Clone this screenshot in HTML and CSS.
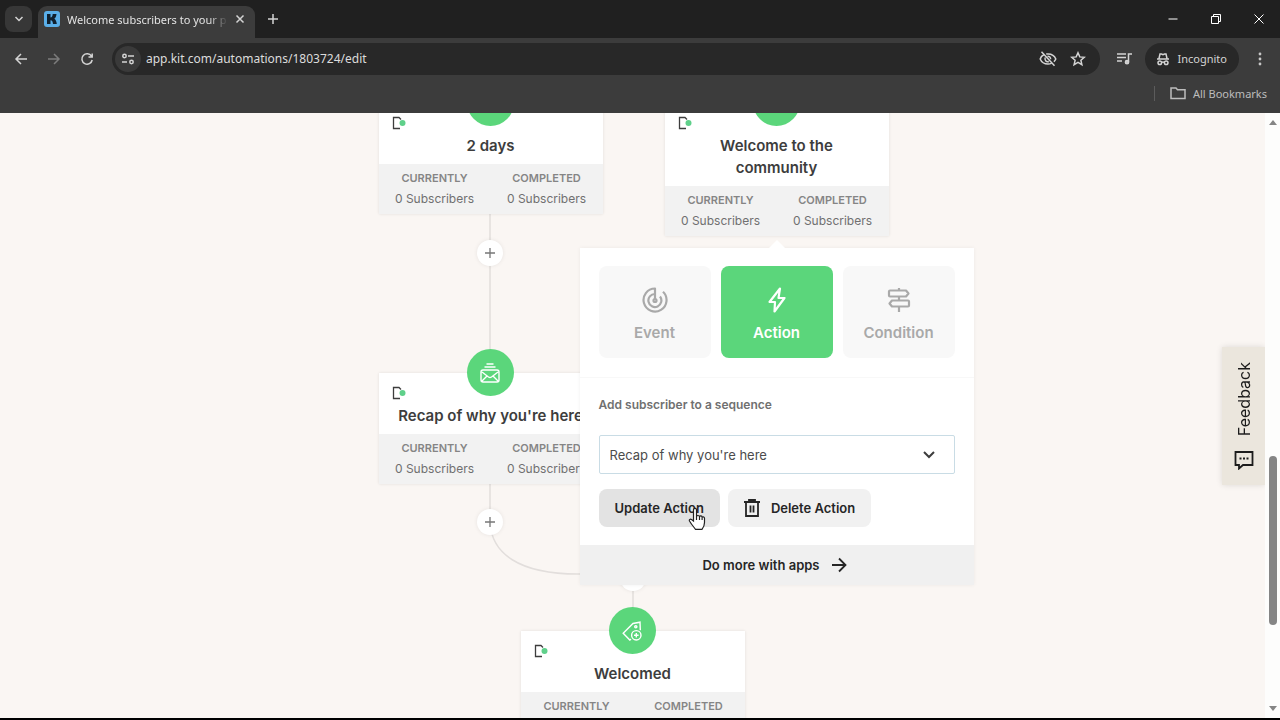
FILE: index.html
```html
<!DOCTYPE html>
<html lang="en">
<head>
<meta charset="utf-8">
<title>Welcome subscribers to your products</title>
<link rel="stylesheet" href="styles.css">
</head>
<body>
<header class="browser">
  <div class="tabstrip">
    <button class="tab-search" aria-label="Search tabs"><svg width="12" height="12" viewBox="0 0 12 12"><path d="M2.500 4l3.500 3.500L9.500 4"/></svg></button>
    <div class="tab">
      <svg class="favicon" width="16" height="16" viewBox="0 0 16 16"><rect width="16" height="16" rx="3" fill="#5aaee8"/><path d="M3 3h3.500v3.500C8 6.500 8.500 5 8.700 3h3.800c-.2 2.300-1 4-2.200 4.700 1.400.8 2.200 2.500 2.500 5.300H9c-.2-2.500-.8-3.800-2.500-3.800V13H3z" fill="#10202e"/></svg>
      <span class="tab-title">Welcome subscribers to your p</span>
      <button class="plain" aria-label="Close tab"><svg width="10" height="10" viewBox="0 0 10 10"><path d="M1.500 1.500l7 7M8.500 1.500l-7 7"/></svg></button>
    </div>
    <button class="plain new-tab" aria-label="New tab"><svg width="12" height="12" viewBox="0 0 12 12"><path d="M6 1v10M1 6h10"/></svg></button>
    <div class="window-controls">
      <button class="plain" aria-label="Minimize"><svg class="thin" width="12" height="12" viewBox="0 0 12 12"><path d="M1.500 6h9"/></svg></button>
      <button class="plain" aria-label="Restore"><svg class="thin" width="12" height="12" viewBox="0 0 12 12"><path d="M1.500 3.500h7v7h-7zM3.500 3.500v-2h7v7h-2"/></svg></button>
      <button class="plain" aria-label="Close"><svg class="thin" width="12" height="12" viewBox="0 0 12 12"><path d="M1.500 1.500l9 9M10.500 1.500l-9 9"/></svg></button>
    </div>
  </div>
  <div class="toolbar">
    <button class="plain nav" aria-label="Back"><svg width="14" height="14" viewBox="0 0 14 14"><path d="M13 7H2M7 2L2 7l5 5"/></svg></button>
    <button class="plain nav dim" aria-label="Forward"><svg width="14" height="14" viewBox="0 0 14 14"><path d="M1 7h11M7 2l5 5-5 5"/></svg></button>
    <button class="plain nav" aria-label="Reload"><svg width="14" height="14" viewBox="0 0 14 14"><path d="M11.500 4.200A5.200 5.200 0 1 0 12.200 8M12.200 1.500v3.500H8.500"/></svg></button>
    <div class="omnibox">
      <button class="site-info" aria-label="Site information"><svg width="14" height="14" viewBox="0 0 14 14"><circle cx="3.500" cy="4" r="1.700"/><path d="M7 4h6M1 10h5"/><circle cx="10.500" cy="10" r="1.700"/></svg></button>
      <input class="url" type="text" aria-label="Address" value="app.kit.com/automations/1803724/edit">
      <button class="plain" aria-label="Tracking protection"><svg width="18" height="18" viewBox="0 0 18 18"><path d="M5 4.500C3 5.600 1.700 7.200 1.200 9c1.200 3 4.300 5 7.800 5 1.200 0 2.300-.2 3.300-.6M7.200 4.100C12 3.400 15.500 5.800 16.800 9c-.4 1-1 1.900-1.900 2.700M6.300 7.500c-1.300 2.500 1 5 3.500 4M8.500 6.200c2 0 3.200 1.400 3.100 3M2.500 1.800l13 14"/></svg></button>
      <button class="plain" aria-label="Bookmark"><svg width="16" height="16" viewBox="0 0 16 16"><path d="M8 1.800l1.800 4.100 4.500.4-3.400 3 1 4.400L8 11.400l-3.900 2.300 1-4.400-3.400-3 4.500-.4z"/></svg></button>
    </div>
    <button class="plain media" aria-label="Media controls"><svg width="16" height="14" viewBox="0 0 16 14"><path d="M1 2h9M1 5.500h9M1 9h5M12.500 10V2H16"/><circle cx="11" cy="10.200" r="1.600" fill="#c7c7c7"/></svg></button>
    <button class="incognito"><svg width="14" height="14" viewBox="0 0 14 14"><path d="M1 7h12M3 6.500l1-4.500h1.500l1.500.6L8.500 2H10l1 4.500M5.800 10.500q1.200-.8 2.400 0"/><circle cx="3.800" cy="10.700" r="1.800"/><circle cx="10.200" cy="10.700" r="1.800"/></svg>Incognito</button>
    <button class="plain" aria-label="Menu"><svg width="4" height="14" viewBox="0 0 4 14"><g fill="#c7c7c7" stroke="none"><circle cx="2" cy="2" r="1.400"/><circle cx="2" cy="7" r="1.400"/><circle cx="2" cy="12" r="1.400"/></g></svg></button>
  </div>
  <div class="bookmarks">
    <button class="all-bookmarks"><svg width="16" height="14" viewBox="0 0 16 14"><path d="M1 2h5l1.500 1.800H15V12.500H1z"/></svg>All Bookmarks</button>
  </div>
</header>

<div class="page">
  <main class="canvas">
    <svg class="wires" width="400" height="620" viewBox="0 0 400 620">
      <path d="M112 90v190M112 370v40C114 440 140 461 200 461h54M255 470v50"/>
    </svg>

    <section class="node node-delay">
      <div class="badge"></div>
      <svg class="status" width="14" height="14" viewBox="0 0 14 14"><path d="M8 12.500H1.500v-11H7l2 2"/><circle cx="10.500" cy="7" r="3"/></svg>
      <h2 class="node-title">2 days</h2>
      <dl class="stats"><div><dt>CURRENTLY</dt><dd>0 Subscribers</dd></div><div><dt>COMPLETED</dt><dd>0 Subscribers</dd></div></dl>
    </section>

    <section class="node node-community">
      <div class="badge"></div>
      <svg class="status" width="14" height="14" viewBox="0 0 14 14"><path d="M8 12.500H1.500v-11H7l2 2"/><circle cx="10.500" cy="7" r="3"/></svg>
      <h2 class="node-title">Welcome to the community</h2>
      <dl class="stats"><div><dt>CURRENTLY</dt><dd>0 Subscribers</dd></div><div><dt>COMPLETED</dt><dd>0 Subscribers</dd></div></dl>
    </section>

    <section class="node node-recap">
      <div class="badge"><svg width="20" height="20" viewBox="0 0 20 20"><path d="M6.500 1h7M4.500 4h11M3 7h14q2 0 2 2v8q0 2-2 2H3q-2 0-2-2V9q0-2 2-2zM2 9l6.500 5q1.500 1 3 0L18 9M2 18l5-5M18 18l-5-5"/></svg></div>
      <svg class="status" width="14" height="14" viewBox="0 0 14 14"><path d="M8 12.500H1.500v-11H7l2 2"/><circle cx="10.500" cy="7" r="3"/></svg>
      <h2 class="node-title">Recap of why you're here</h2>
      <dl class="stats"><div><dt>CURRENTLY</dt><dd>0 Subscribers</dd></div><div><dt>COMPLETED</dt><dd>0 Subscribers</dd></div></dl>
    </section>

    <section class="node node-welcomed">
      <div class="badge"><svg width="20" height="20" viewBox="0 0 20 20"><path d="M9 18.200L7.800 19 1.200 12.200 11 2.500l7-1.300.3 8"/><circle cx="13.800" cy="5.800" r="1.100"/><circle cx="14.300" cy="14.300" r="4.700"/><path d="M14.300 12v4.600M12 14.300h4.600"/></svg></div>
      <svg class="status" width="14" height="14" viewBox="0 0 14 14"><path d="M8 12.500H1.500v-11H7l2 2"/><circle cx="10.500" cy="7" r="3"/></svg>
      <h2 class="node-title">Welcomed</h2>
      <dl class="stats"><div><dt>CURRENTLY</dt><dd>0 Subscribers</dd></div><div><dt>COMPLETED</dt><dd>0 Subscribers</dd></div></dl>
    </section>

    <button class="add add-first" aria-label="Add step"><svg width="10" height="10" viewBox="0 0 10 10"><path d="M5 0v10M0 5h10"/></svg></button>
    <button class="add add-second" aria-label="Add step"><svg width="10" height="10" viewBox="0 0 10 10"><path d="M5 0v10M0 5h10"/></svg></button>
    <button class="add add-merge" aria-label="Add step"></button>

    <form class="popover">
      <div class="kinds">
        <button type="button" class="kind"><svg width="28" height="28" viewBox="0 0 28 28"><path d="M14 14V2.500A11.500 11.500 0 1 0 22 5.700M14 8a6.500 6.500 0 1 0 5 2.500"/><circle cx="14" cy="14.500" r="1.500"/></svg>Event</button>
        <button type="button" class="kind selected"><svg width="28" height="28" viewBox="0 0 28 28"><path d="M17 2.500L6.500 16h5.500L11.500 25.500 21.500 12h-6z"/></svg>Action</button>
        <button type="button" class="kind"><svg width="28" height="28" viewBox="0 0 28 28"><path d="M14 2v2.500M14 10.500v4M14 20.500V26M5 4.500h16l2.500 3-2.500 3H5q-1 0-1-1v-4q0-1 1-1zM23 14.500H7l-2.500 3 2.500 3h16q1 0 1-1v-4q0-1-1-1z"/></svg>Condition</button>
      </div>
      <div class="settings">
        <label class="field-label" for="sequence">Add subscriber to a sequence</label>
        <div class="select-wrap">
          <select id="sequence"><option>Recap of why you're here</option></select>
          <svg class="chevron" width="14" height="10" viewBox="0 0 14 10"><path d="M2 2l5 5 5-5"/></svg>
        </div>
        <div class="actions">
          <button type="button" class="btn hovered">Update Action<svg class="pointer" width="18" height="24" viewBox="0 0 18 24"><path d="M5.500 14V3q0-1.700 1.500-1.700T8.500 3v6.500q.3-1 1.500-1t1.500 1.200q.3-.9 1.400-.8 1.200.1 1.200 1.300.4-.5 1.300-.4 1.100.2 1.100 1.400v4.300c0 3-1 5-2.500 6.800H7.500C5.800 20 3.500 17.500 1.500 14c-.6-1.400.8-2.300 2-1.500zM8.500 9.500V13M11.500 10v3M14.100 10.500V13"/></svg></button>
          <button type="button" class="btn"><svg width="16" height="18" viewBox="0 0 16 18"><path d="M0 3h16M5 2.500V1h6v1.500M2 3v14h12V3M6.500 6.500v7M9.500 6.500v7"/></svg>Delete Action</button>
        </div>
      </div>
      <a class="more" href="#apps">Do more with apps<svg width="16" height="16" viewBox="0 0 16 16"><path d="M1 8h13M8 1.500L14.500 8 8 14.500"/></svg></a>
    </form>

    <button class="feedback"><svg width="20" height="20" viewBox="0 0 20 20"><path d="M1.500 2h17v13H9l-4 3.500V15H1.500z"/><path class="dots" d="M5.500 8.500h2M9 8.500h2M12.500 8.500h2"/></svg><span>Feedback</span></button>
  </main>
  <div class="scrollbar">
    <svg width="8" height="5" viewBox="0 0 8 5"><path d="M0 5l4-5 4 5z"/></svg>
    <div class="track"><div class="thumb"></div></div>
    <svg width="8" height="5" viewBox="0 0 8 5"><path d="M0 0l4 5 4-5z"/></svg>
  </div>
</div>
</body>
</html>
```

FILE: styles.css
```css
* { box-sizing: border-box; }

body {
  margin: 0;
  height: 100vh;
  display: flex;
  flex-direction: column;
  overflow: hidden;
  background: #3c3c3c;
  border-bottom: 2px solid #000;
  font-family: Inter, "Liberation Sans", sans-serif;
}

svg { flex: none; fill: none; stroke: currentColor; }
button { border: 0; padding: 0; margin: 0; font: inherit; color: inherit; background: none; }

/* Browser chrome */
.browser { flex: none; color: #d4d4d4; font-family: "Noto Sans", "Open Sans", sans-serif; font-size: 11px; }
.browser svg { stroke-width: 1.5; }
.browser svg.thin { stroke-width: 1; color: #fff; }
.browser .favicon { stroke: none; }
.plain { display: flex; align-items: center; justify-content: center; }

.tabstrip { display: flex; align-items: center; height: 38px; padding-left: 5px; background: #202020; }
.tab-search { display: flex; align-items: center; justify-content: center; width: 27px; height: 26px; border-radius: 8px; background: #373737; }
.tab { display: flex; align-items: center; gap: 7px; align-self: flex-end; width: 217px; height: 32px; margin-left: 6px; padding: 0 10px 6px 6px; border-radius: 9px 9px 0 0; background: #3c3c3c; }
.tab-title { flex: 1; white-space: nowrap; color: #e3e3e3; -webkit-mask-image: linear-gradient(90deg, #000 88%, transparent); mask-image: linear-gradient(90deg, #000 88%, transparent); }
.new-tab { margin-left: 12px; }
.window-controls { display: flex; margin-left: auto; }
.window-controls .plain { width: 43px; height: 38px; }

.toolbar { display: flex; align-items: center; height: 41px; padding: 0 18px 0 4px; }
.nav { width: 33px; height: 33px; }
.dim { color: #7c7c7c; }
.omnibox { display: flex; flex: 1; align-items: center; gap: 13px; height: 32px; margin-left: 9px; padding: 0 14px 0 3px; border-radius: 16px; background: #282828; }
.site-info { display: flex; align-items: center; justify-content: center; width: 26px; height: 26px; border-radius: 50%; background: #3a3a3a; }
.url { flex: 1; min-width: 0; margin-left: -8px; padding: 0; border: 0; outline: 0; background: none; color: #dcdcdc; font: inherit; font-size: 12px; }
.media { margin: 0 13px 0 16px; }
.incognito { display: flex; align-items: center; gap: 8px; height: 32px; margin-right: 19px; padding: 0 12px 0 11px; border-radius: 16px; background: #282828; }
.bookmarks { display: flex; align-items: center; justify-content: flex-end; height: 34px; padding: 0 13px 6px 0; }
.all-bookmarks { display: flex; align-items: center; gap: 7px; padding-left: 15px; border-left: 1px solid #5c5c5c; color: #bdbdbd; }

/* Page */
.page { display: flex; flex: 1; min-height: 0; background: #faf6f3; }
.canvas { position: relative; flex: 1; overflow: hidden; color: #3d3d3d; }
.scrollbar { display: flex; flex-direction: column; align-items: center; width: 15px; padding: 7px 0; background: #fdfdfc; }
.scrollbar svg { fill: #858585; stroke: none; }
.track { flex: 1; width: 8px; }
.track::before { content: ""; display: block; height: 57%; }
.thumb { height: 29%; border-radius: 4px; background: #858585; }

.wires { position: absolute; top: 0; left: calc(50% - 255px); color: #e2dedc; stroke-width: 1.5; }
.node { position: absolute; width: 224px; background: #fff; box-shadow: 0 0 3px rgba(0, 0, 0, 0.1); }
.node-delay { top: -10px; left: calc(50% - 254px); }
.node-community { top: -10px; left: calc(50% + 32px); }
.node-recap { top: 260px; left: calc(50% - 254px); }
.node-welcomed { top: 518px; left: calc(50% - 112px); }
.badge { position: absolute; top: -24px; left: 88px; display: flex; align-items: center; justify-content: center; width: 47px; height: 47px; border-radius: 50%; background: #5bd67b; color: #fff; }
.badge svg { stroke-width: 1.4; }
.status { position: absolute; top: 13px; left: 13px; stroke-width: 1.3; }
.status circle { fill: #5fd08a; stroke: none; }
.node-title { margin: 0; padding: 32px 16px 7px; text-align: center; font-size: 15px; line-height: 22px; font-weight: 600; }
.node-recap .node-title { white-space: nowrap; }
.stats { display: grid; grid-template-columns: 1fr 1fr; margin: 0; padding: 6px 0 7px; background: #f2f2f2; text-align: center; line-height: 16px; color: #707070; }
.stats dt { margin-bottom: 5px; font-size: 11px; font-weight: 600; color: #858585; }
.stats dd { margin: 0; font-size: 12px; }

.add { position: absolute; left: calc(50% - 156px); display: flex; align-items: center; justify-content: center; width: 26px; height: 26px; border-radius: 50%; background: #fff; box-shadow: 0 0 4px rgba(0, 0, 0, 0.08); color: #777; }
.add svg { stroke-width: 1.3; }
.add-first { top: 127px; }
.add-second { top: 396px; }
.add-merge { top: 452px; left: calc(50% - 13px); }

/* Step editor */
.popover { position: absolute; top: 135px; left: calc(50% - 53px); width: 394px; margin: 0; background: #fff; box-shadow: 0 0 4px rgba(0, 0, 0, 0.06); }
.popover::before { content: ""; position: absolute; top: -8px; left: 189px; border: 8px solid transparent; border-top: 0; border-bottom-color: #fff; }
.kinds { display: grid; grid-template-columns: 1fr 1fr 1fr; gap: 10px; padding: 18px 19px 19px; border-bottom: 1px solid #f8f8f8; }
.kind { display: flex; flex-direction: column; align-items: center; gap: 9px; padding: 20px 0 15px; border-radius: 8px; background: #f8f8f8; color: #a9a9a9; font-size: 15px; line-height: 20px; font-weight: 600; }
.kind svg { stroke-width: 2.2; stroke-linejoin: round; }
.kind.selected { background: #5bd67b; color: #fff; }
.settings { display: flex; flex-direction: column; padding: 18px 19px; }
.field-label { margin-bottom: 21px; font-size: 12px; line-height: 18px; font-weight: 600; color: #707070; }
.select-wrap { position: relative; display: flex; }
.select-wrap select { flex: 1; height: 39px; padding: 0 10px; border: 1px solid #c9dce5; border-radius: 2px; appearance: none; background: #fff; color: #4c4c4c; font: inherit; font-size: 13px; }
.chevron { position: absolute; top: 15px; right: 19px; stroke-width: 2; pointer-events: none; }
.actions { display: flex; gap: 8px; margin-top: 15px; }
.btn { position: relative; display: flex; align-items: center; gap: 11px; height: 38px; padding: 0 16px; border-radius: 8px; background: #f1f1f1; color: #262626; font-size: 13px; font-weight: 600; }
.btn svg { stroke-width: 1.8; }
.btn.hovered { background: #e3e3e3; }
.btn .pointer { position: absolute; top: 18px; right: 14px; fill: #fff; color: #222; stroke-width: 1.2; }
.more { display: flex; align-items: center; justify-content: center; gap: 11px; height: 40px; padding-right: 4px; background: #f0f0f0; color: #262626; font-size: 13px; font-weight: 600; text-decoration: none; }
.more svg { stroke-width: 1.8; }

.feedback { position: absolute; top: 234px; right: 0; display: flex; flex-direction: column-reverse; align-items: center; gap: 14px; width: 43px; padding: 15px 0; background: #ebe6dd; box-shadow: 0 0 6px rgba(0, 0, 0, 0.12); color: #1c1c1c; font-size: 16px; line-height: 20px; }
.feedback span { writing-mode: vertical-rl; transform: rotate(180deg); }
.feedback svg { stroke-width: 1.8; }
```
